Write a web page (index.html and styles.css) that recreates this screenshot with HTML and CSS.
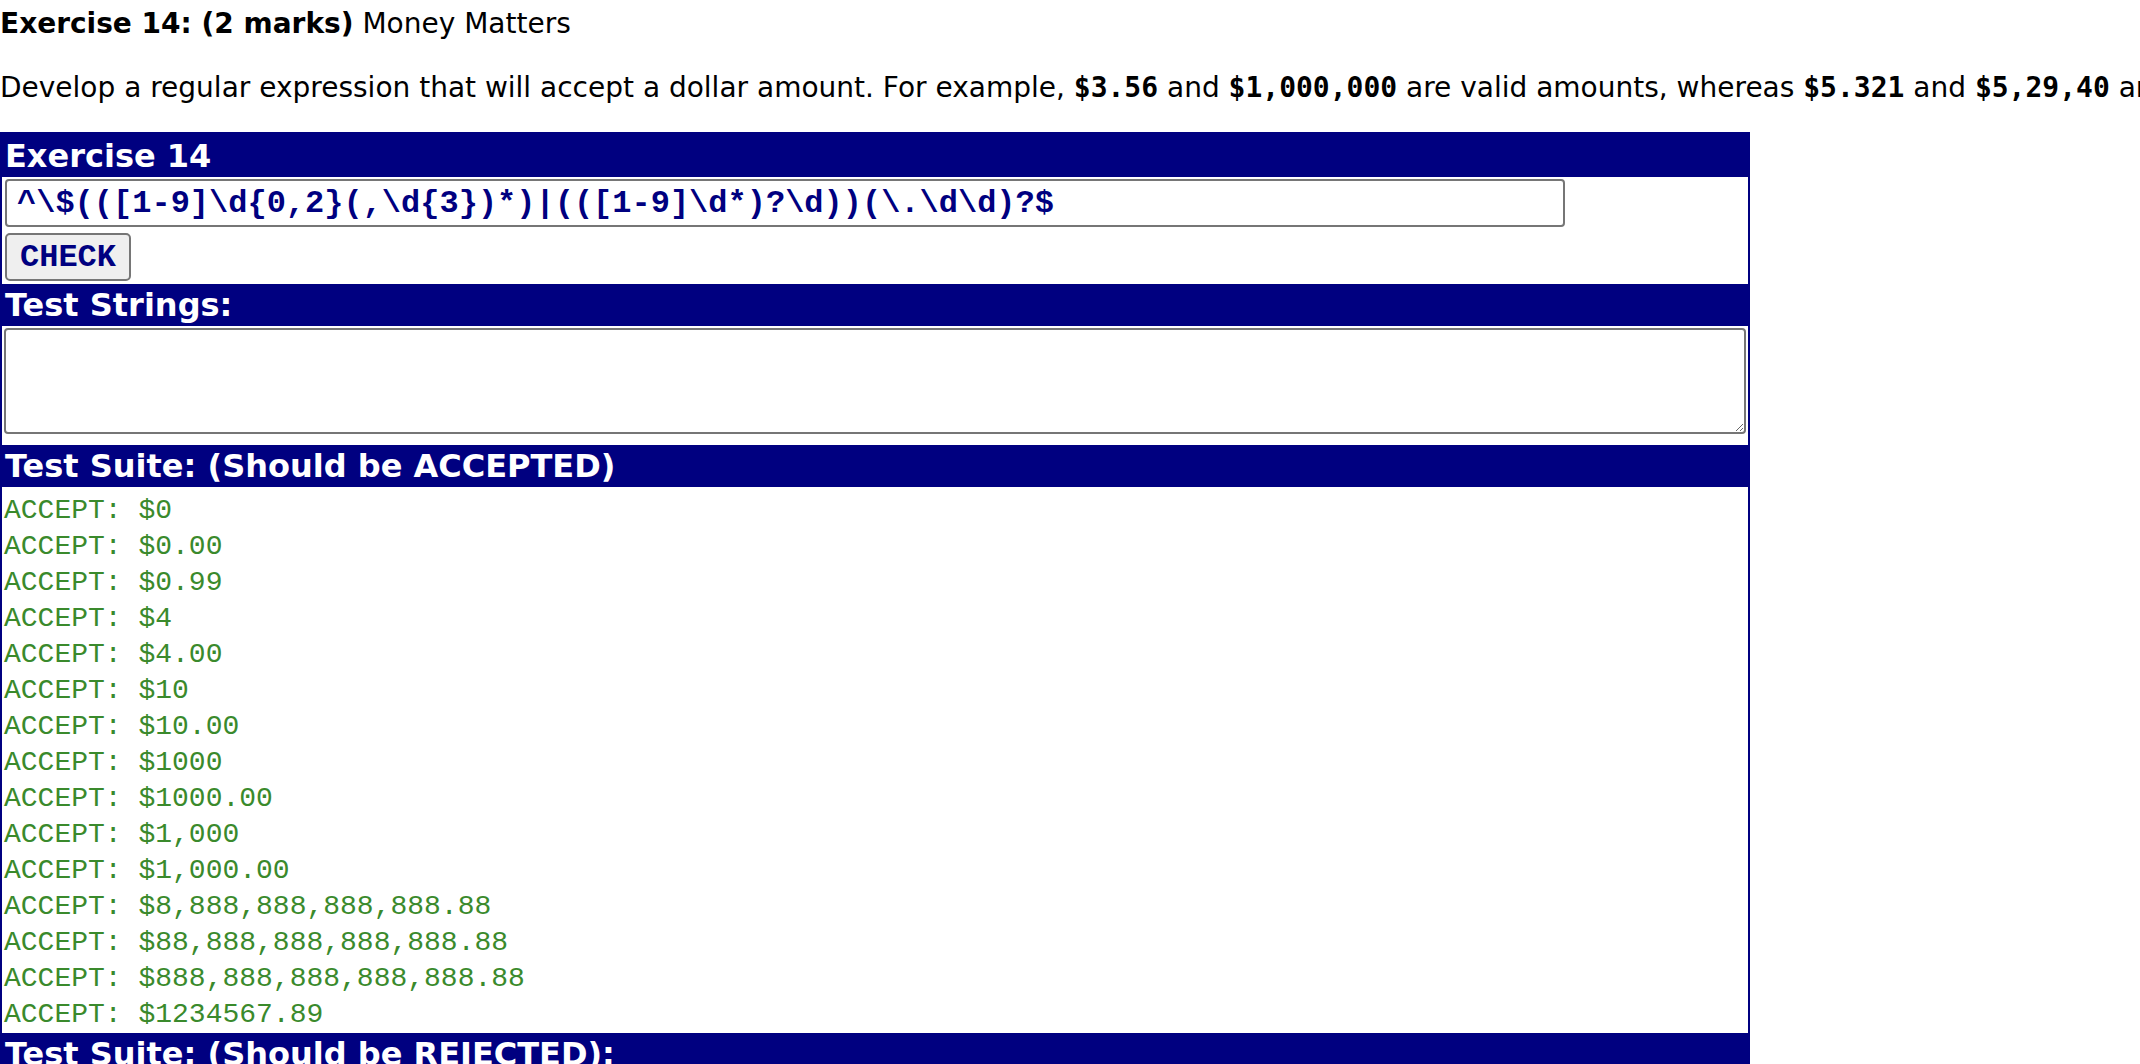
FILE: index.html
```html
<!DOCTYPE html>
<html>
<head>
<meta charset="utf-8">
<title>Exercise 14</title>
<link rel="stylesheet" href="styles.css">
</head>
<body>
<div class="title"><b>Exercise 14: (2 marks)</b> Money Matters</div>
<p class="desc">Develop a regular expression that will accept a dollar amount. For example, <code>$3.56</code> and <code>$1,000,000</code> are valid amounts, whereas <code>$5.321</code> and <code>$5,29,40</code> are not.</p>
<div class="panel">
  <div class="head head-first">Exercise 14</div>
  <div class="form">
    <input class="regex" type="text" value="^\$(([1-9]\d{0,2}(,\d{3})*)|(([1-9]\d*)?\d))(\.\d\d)?$">
    <button class="check">CHECK</button>
  </div>
  <div class="head">Test Strings:</div>
  <div class="area-wrap"><textarea class="tests"></textarea></div>
  <div class="head">Test Suite: (Should be ACCEPTED)</div>
  <div class="suite">
    <div class="row">ACCEPT: $0</div>
    <div class="row">ACCEPT: $0.00</div>
    <div class="row">ACCEPT: $0.99</div>
    <div class="row">ACCEPT: $4</div>
    <div class="row">ACCEPT: $4.00</div>
    <div class="row">ACCEPT: $10</div>
    <div class="row">ACCEPT: $10.00</div>
    <div class="row">ACCEPT: $1000</div>
    <div class="row">ACCEPT: $1000.00</div>
    <div class="row">ACCEPT: $1,000</div>
    <div class="row">ACCEPT: $1,000.00</div>
    <div class="row">ACCEPT: $8,888,888,888,888.88</div>
    <div class="row">ACCEPT: $88,888,888,888,888.88</div>
    <div class="row">ACCEPT: $888,888,888,888,888.88</div>
    <div class="row">ACCEPT: $1234567.89</div>
  </div>
  <div class="head">Test Suite: (Should be REJECTED):</div>
</div>
</body>
</html>
```
FILE: styles.css
```css
html {
  overflow: hidden;
}
body {
  margin: 0;
  font-family: "DejaVu Sans", Verdana, sans-serif;
  color: #000;
  background: #fff;
}
.title {
  font-size: 28px;
  line-height: 33px;
  padding-top: 7px;
  white-space: nowrap;
}
.desc {
  margin: 31px 0 0 0;
  font-size: 28px;
  line-height: 33px;
  white-space: nowrap;
}
.desc code {
  font-family: "DejaVu Sans Mono", monospace;
  font-weight: bold;
  font-size: 28px;
}
.panel {
  margin-top: 28px;
  width: 1750px;
  box-sizing: border-box;
  border: 2px solid #000080;
  border-bottom: none;
  display: flex;
  flex-direction: column;
}
.head {
  background: #000080;
  color: #fff;
  font-weight: bold;
  font-size: 32px;
  line-height: 42px;
  height: 42px;
  padding-left: 3px;
  white-space: nowrap;
}
.head-first {
  height: 43px;
  line-height: 44px;
}
.form {
  display: flex;
  flex-direction: column;
  align-items: flex-start;
  padding: 2px 0 3px 3px;
  gap: 6px;
}
.regex {
  width: 1560px;
  height: 48px;
  box-sizing: border-box;
  border: 2px solid #767676;
  border-radius: 4px;
  padding: 0 10px;
  margin: 0;
  font-family: "Liberation Mono", "Courier New", monospace;
  font-weight: bold;
  font-size: 32px;
  color: #000080;
  background: #fff;
}
.check {
  width: 126px;
  height: 48px;
  box-sizing: border-box;
  border: 2px solid #767676;
  border-radius: 5px;
  background: #efefef;
  margin: 0;
  padding: 0;
  font-family: "Liberation Mono", "Courier New", monospace;
  font-weight: bold;
  font-size: 32px;
  color: #000080;
}
.area-wrap {
  padding: 2px 0 11px 2px;
  display: flex;
}
.tests {
  width: 1742px;
  height: 106px;
  box-sizing: border-box;
  border: 2px solid #767676;
  border-radius: 4px;
  margin: 0;
  resize: both;
  background: #fff;
}
.suite {
  padding-top: 6px;
  display: flex;
  flex-direction: column;
}
.row {
  font-family: "Liberation Mono", "Courier New", monospace;
  font-size: 28px;
  line-height: 36px;
  height: 36px;
  color: #3a8a2c;
  padding-left: 2px;
  white-space: nowrap;
}
```
